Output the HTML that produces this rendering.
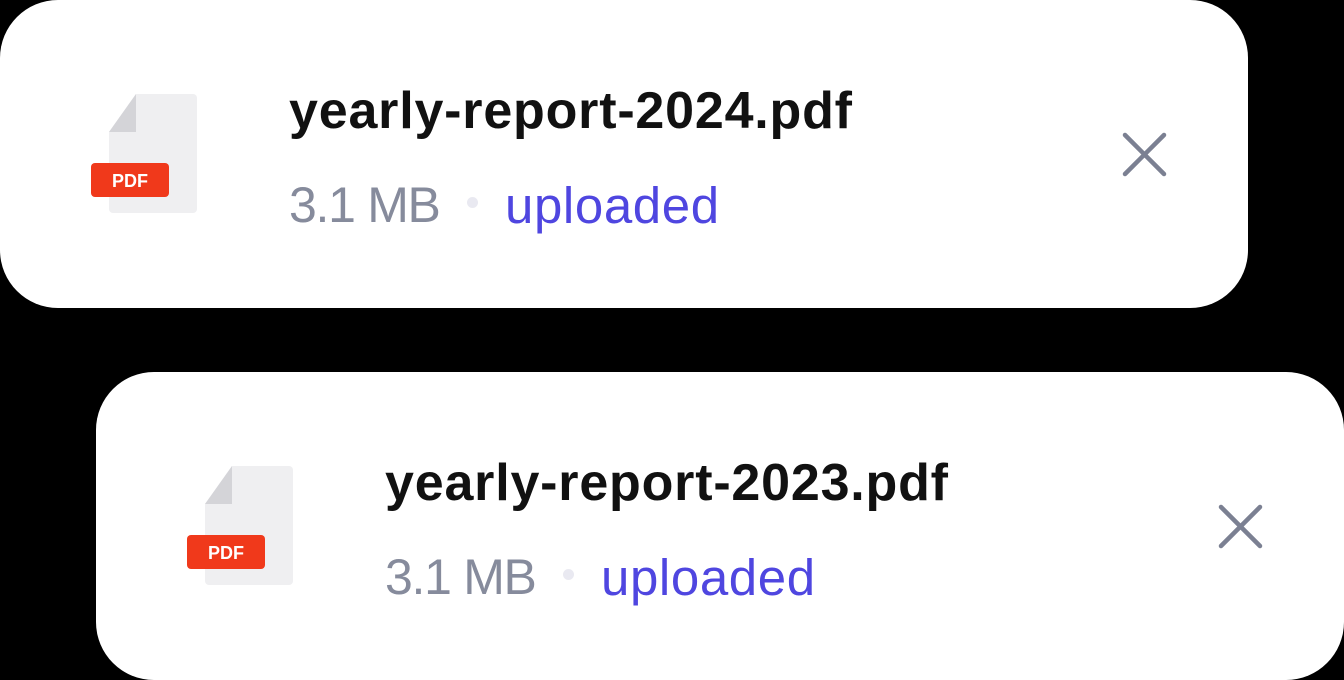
<!DOCTYPE html>
<html><head><style>
html,body{margin:0;padding:0;background:#000;width:1344px;height:680px;overflow:hidden;position:relative;font-family:"Liberation Sans",sans-serif}
.card{position:absolute;width:1248px;height:308px;background:#fff;border-radius:58px}
.icon{position:absolute;left:91px;top:94px}
.t{position:absolute;left:289px;top:81px;font-size:52px;font-weight:bold;color:#111;letter-spacing:0.8px;white-space:nowrap}
.s{position:absolute;left:289px;top:176px;font-size:50px;color:#868b9c;letter-spacing:-1.3px;white-space:nowrap}
.d{position:absolute;left:467px;top:197px;width:11px;height:11px;border-radius:50%;background:#e9e9f1}
.u{position:absolute;left:505px;top:176px;font-size:51px;color:#4f46e0;letter-spacing:0.6px;white-space:nowrap}
.x{position:absolute;left:1120px;top:130px}
</style></head><body>
<div class="card" style="left:0;top:0">
<svg class="icon" width="110" height="122" viewBox="0 0 110 122"><path d="M45 0H102a4 4 0 0 1 4 4V115a4 4 0 0 1-4 4H22a4 4 0 0 1-4-4V38Z" fill="#efeff1"/><path d="M45 0V38H18Z" fill="#d4d4d8"/><rect x="0" y="69" width="78" height="34" rx="4" fill="#f0391b"/><text x="39" y="93" font-size="18" font-weight="bold" fill="#fff" text-anchor="middle" font-family="Liberation Sans">PDF</text></svg>
<div class="t">yearly-report-2024.pdf</div>
<div class="s">3.1 MB</div><div class="d"></div><div class="u">uploaded</div>
<svg class="x" width="50" height="50"><path d="M5 5L44 44M44 5L5 44" stroke="#7b8092" stroke-width="4.5" stroke-linecap="round"/></svg>
</div>
<div class="card" style="left:96px;top:372px">
<svg class="icon" width="110" height="122" viewBox="0 0 110 122"><path d="M45 0H102a4 4 0 0 1 4 4V115a4 4 0 0 1-4 4H22a4 4 0 0 1-4-4V38Z" fill="#efeff1"/><path d="M45 0V38H18Z" fill="#d4d4d8"/><rect x="0" y="69" width="78" height="34" rx="4" fill="#f0391b"/><text x="39" y="93" font-size="18" font-weight="bold" fill="#fff" text-anchor="middle" font-family="Liberation Sans">PDF</text></svg>
<div class="t">yearly-report-2023.pdf</div>
<div class="s">3.1 MB</div><div class="d"></div><div class="u">uploaded</div>
<svg class="x" width="50" height="50"><path d="M5 5L44 44M44 5L5 44" stroke="#7b8092" stroke-width="4.5" stroke-linecap="round"/></svg>
</div>
</body></html>
